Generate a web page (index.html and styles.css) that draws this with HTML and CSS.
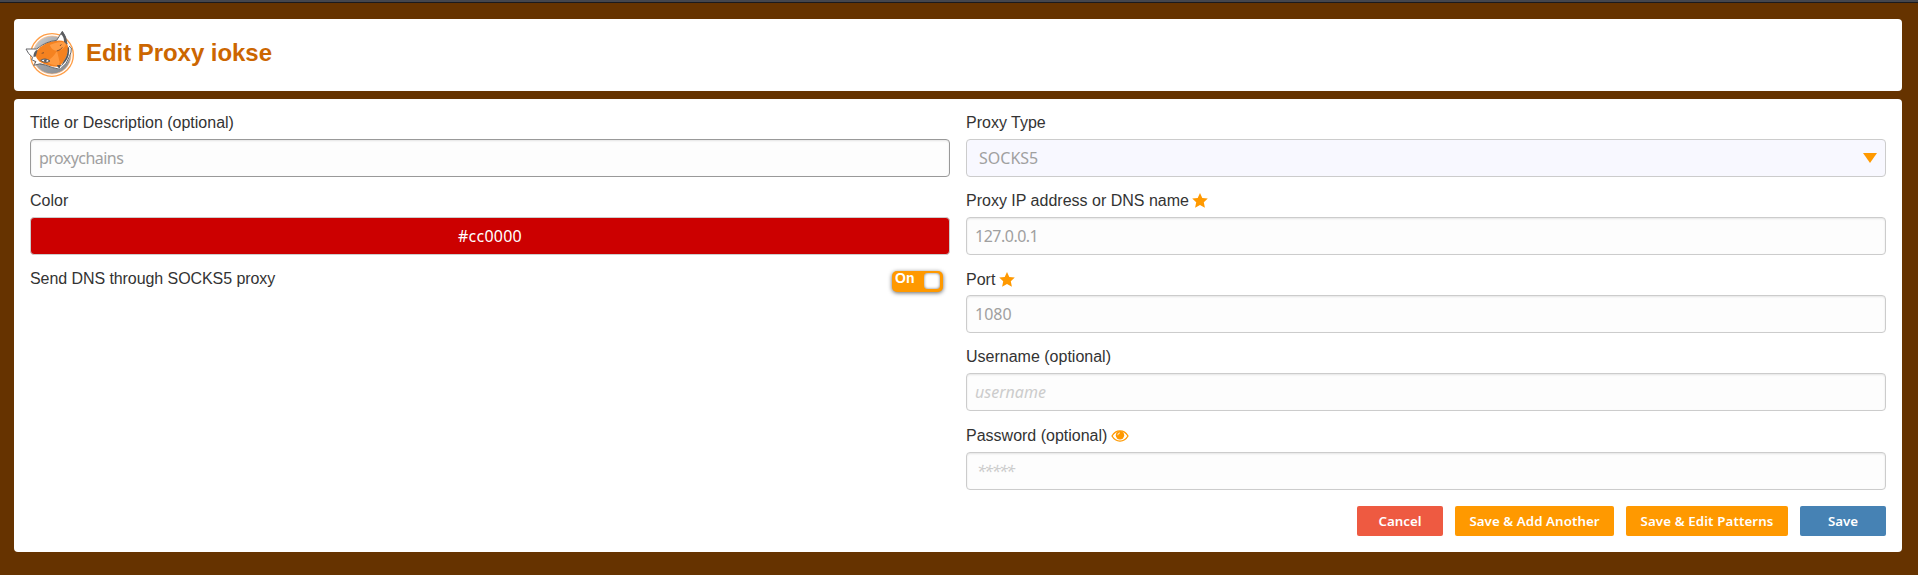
FILE: index.html
```
<!DOCTYPE html>
<html lang="en">
<head>
<meta charset="utf-8">
<title>Edit Proxy iokse</title>
<link rel="stylesheet" href="styles.css">
</head>
<body>
<header class="card header">
  <svg class="logo" viewBox="0 0 192 192" aria-hidden="true">
    <defs><linearGradient id="disc" x1="0" y1="0" x2="1" y2="1"><stop offset="0" stop-color="#d2d3d5"/><stop offset=".45" stop-color="#a2a4a8"/><stop offset="1" stop-color="#85878b"/></linearGradient></defs>
    <circle cx="96" cy="99" r="64" fill="#fff" stroke="#ff9d45" stroke-width="4"/>
    <circle cx="96" cy="99" r="57" fill="url(#disc)" stroke="#ffb87c" stroke-width="2"/>
    <path d="M18 81 L50 81 Q74 58 110 55 L127 28 Q139 42 141 66 L154 76 Q155 101 142 121 L120 143 Q88 136 62 124 L41 131 L48 119 L35 113 L38 106 Q25 98 18 81Z" fill="#fff"/>
    <path d="M49 88 Q74 56 110 56 Q137 53 144 72 Q148 104 118 134 Q88 136 59 119 Q43 107 49 88Z" fill="#f58220"/>
    <path d="M89 69 Q120 55 136 62 Q143 73 118 86 Q99 91 89 69Z" fill="#ff9c43"/>
    <path d="M78 118 Q99 109 111 86 L119 121 L115 131 Q94 131 78 118Z" fill="#ff993e"/>
    <path d="M18 81 L50 81 Q77 58 110 55 L127 28 Q139 42 141 66" fill="none" stroke="#66676b" stroke-width="3" stroke-linejoin="round"/>
    <path d="M18 81 Q24 96 38 106 L35 113 L48 119 L41 130 Q59 122 76 129 Q98 138 120 142 Q143 125 148 104 Q155 90 154 78 L147 72" fill="none" stroke="#66676b" stroke-width="3" stroke-linejoin="round"/>
    <path d="M147 75 Q150 102 137 118 L122 135 L130 119 Q145 98 143 77Z" fill="#55565a"/>
    <path d="M40 104 Q41 86 53 83 L47 104Z M122 36 L127 28 Q141 44 141 68 L132 59 Q133 45 122 36Z" fill="#5c5d60"/>
    <path d="M62 115 Q75 106 90 117 Q77 126 62 115Z" fill="#fff" stroke="#55565a" stroke-width="3"/>
    <circle cx="76" cy="116" r="4" fill="#55565a"/>
    <path d="M65 94 L72 92 M110 87 Q122 85 127 76 M120 72 L124 67" fill="none" stroke="#85502c" stroke-width="3"/>
    <path d="M110 130 L123 129 L118 140Z" fill="#4f5054"/>
  </svg>
  <h1 class="title">Edit Proxy iokse</h1>
</header>
<main class="card panel">
  <div class="columns">
    <section class="column">
      <label class="label">Title or Description (optional)</label>
      <div class="input input-strong">proxychains</div>
      <label class="label">Color</label>
      <div class="input input-color">#cc0000</div>
      <div class="switch-row">
        <label class="label">Send DNS through SOCKS5 proxy</label>
        <div class="switch"><span class="switch-text">On</span><span class="knob"></span></div>
      </div>
    </section>
    <section class="column">
      <label class="label">Proxy Type</label>
      <div class="input input-select">SOCKS5<svg class="arrow" viewBox="0 0 14 10"><path d="M0 0H14L7 10Z" fill="#f90"/></svg></div>
      <label class="label">Proxy IP address or DNS name
        <svg class="star" viewBox="0 0 16 15"><path d="M8 0 10.3 4.9 15.8 5.6 11.8 9.3 12.9 14.8 8 12.1 3.1 14.8 4.2 9.3 .2 5.6 5.7 4.9Z"/></svg></label>
      <div class="input input-address">127.0.0.1</div>
      <label class="label label-low">Port
        <svg class="star" viewBox="0 0 16 15"><path d="M8 0 10.3 4.9 15.8 5.6 11.8 9.3 12.9 14.8 8 12.1 3.1 14.8 4.2 9.3 .2 5.6 5.7 4.9Z"/></svg></label>
      <div class="input">1080</div>
      <label class="label">Username (optional)</label>
      <div class="input input-hint">username</div>
      <label class="label label-tall">Password (optional)
        <svg class="eye" viewBox="0 0 18 12"><path d="M1 6Q4 .9 9 .9T17 6Q14 11.1 9 11.1T1 6Z" fill="none" stroke="#f90" stroke-width="1.3"/><circle cx="9" cy="5.2" r="4.2" fill="#f90"/><path d="M6.8 5.2A2.3 2.3 0 0 1 9 2.9" fill="none" stroke="#fff" stroke-width=".8"/></svg></label>
      <div class="input input-hint input-password">*****</div>
    </section>
  </div>
  <div class="actions">
    <button class="button cancel">Cancel</button>
    <button class="button another">Save &amp; Add Another</button>
    <button class="button patterns">Save &amp; Edit Patterns</button>
    <button class="button save">Save</button>
  </div>
</main>
</body>
</html>
```
FILE: styles.css
```
* { box-sizing: border-box; }
body {
  margin: 0;
  height: 575px;
  padding: 19px 16px 0 14px;
  background: linear-gradient(#45464d 2px, #1b1a1e 2px, #1b1a1e 3px, #630 3px);
  color: #333;
  font: 16px/20px "Liberation Sans", Arial, sans-serif;
  overflow: hidden;
}
.card { background: #fff; border-radius: 4px; }
.header { display: flex; height: 72px; padding: 3px 6px; }
.logo { width: 64px; height: 64px; flex: none; }
.title { margin: 17px 0 0 2px; font-size: 24px; line-height: 28px; letter-spacing: -.05px; color: #c60; }
.panel { height: 453px; margin-top: 8px; padding: 13px 16px 16px; }
.columns { display: grid; grid-template-columns: 920px 920px; gap: 16px; }
.column { display: flex; flex-direction: column; }
.label { display: block; height: 27px; line-height: 21px; white-space: nowrap; }
.switch-row .label { letter-spacing: -.07px; }
.label-low { padding-top: 1px; }
.label-tall { height: 28px; padding-top: 1px; }
.input {
  display: flex;
  align-items: center;
  height: 38px;
  margin-bottom: 13px;
  padding: 0 8px;
  border: 1px solid #ccc;
  border-radius: 4px;
  background: #fdfdfd;
  box-shadow: inset 0 1px 2px #e4e4e4;
  color: #a0a0a0;
  font-family: "Noto Sans", sans-serif;
}
.input-strong { border-color: #999; letter-spacing: -.55px; }
.input-address { letter-spacing: -.5px; }
.input-color { justify-content: center; background: #c00; box-shadow: none; color: #fff; letter-spacing: .25px; }
.input-select { justify-content: space-between; padding: 0 8px 0 12px; background: #f8f8ff; box-shadow: none; }
.input-hint { font-style: italic; color: #ccc; }
.input-password { padding-left: 10px; letter-spacing: -1.5px; }
.arrow { width: 14px; height: 10px; }
.star { width: 16px; height: 15px; margin-left: -1px; vertical-align: -2px; fill: #f90; }
.eye { width: 18px; height: 12px; margin-left: -1px; vertical-align: -1px; }
.column:last-child .input:last-child { margin-bottom: 0; }
.switch-row { display: flex; justify-content: space-between; }
.switch {
  display: flex;
  justify-content: space-between;
  width: 51px;
  height: 21px;
  margin: 3px 7px 0 0;
  padding: 2px 3px 3px;
  border-radius: 5px;
  background: #f90;
  box-shadow: 0 1px 4px #666;
}
.switch-text { color: #fff; font-size: 14px; font-weight: bold; line-height: 11px; }
.knob { width: 16px; height: 16px; border-radius: 4px; background: #fff; box-shadow: inset 0 0 3px #777; }
.actions { display: flex; justify-content: flex-end; gap: 12px; margin-top: 16px; }
.button {
  height: 30px;
  padding: 0;
  border: 0;
  border-radius: 2px;
  color: #fff;
  font: 600 13.333px/30px "Noto Sans", sans-serif;
  text-align: center;
}
.cancel { width: 86px; background: #ee5a41; }
.another { width: 159px; background: #f90; letter-spacing: .05px; }
.patterns { width: 162px; background: #f90; letter-spacing: .1px; }
.save { width: 86px; background: #4682b4; }
```
